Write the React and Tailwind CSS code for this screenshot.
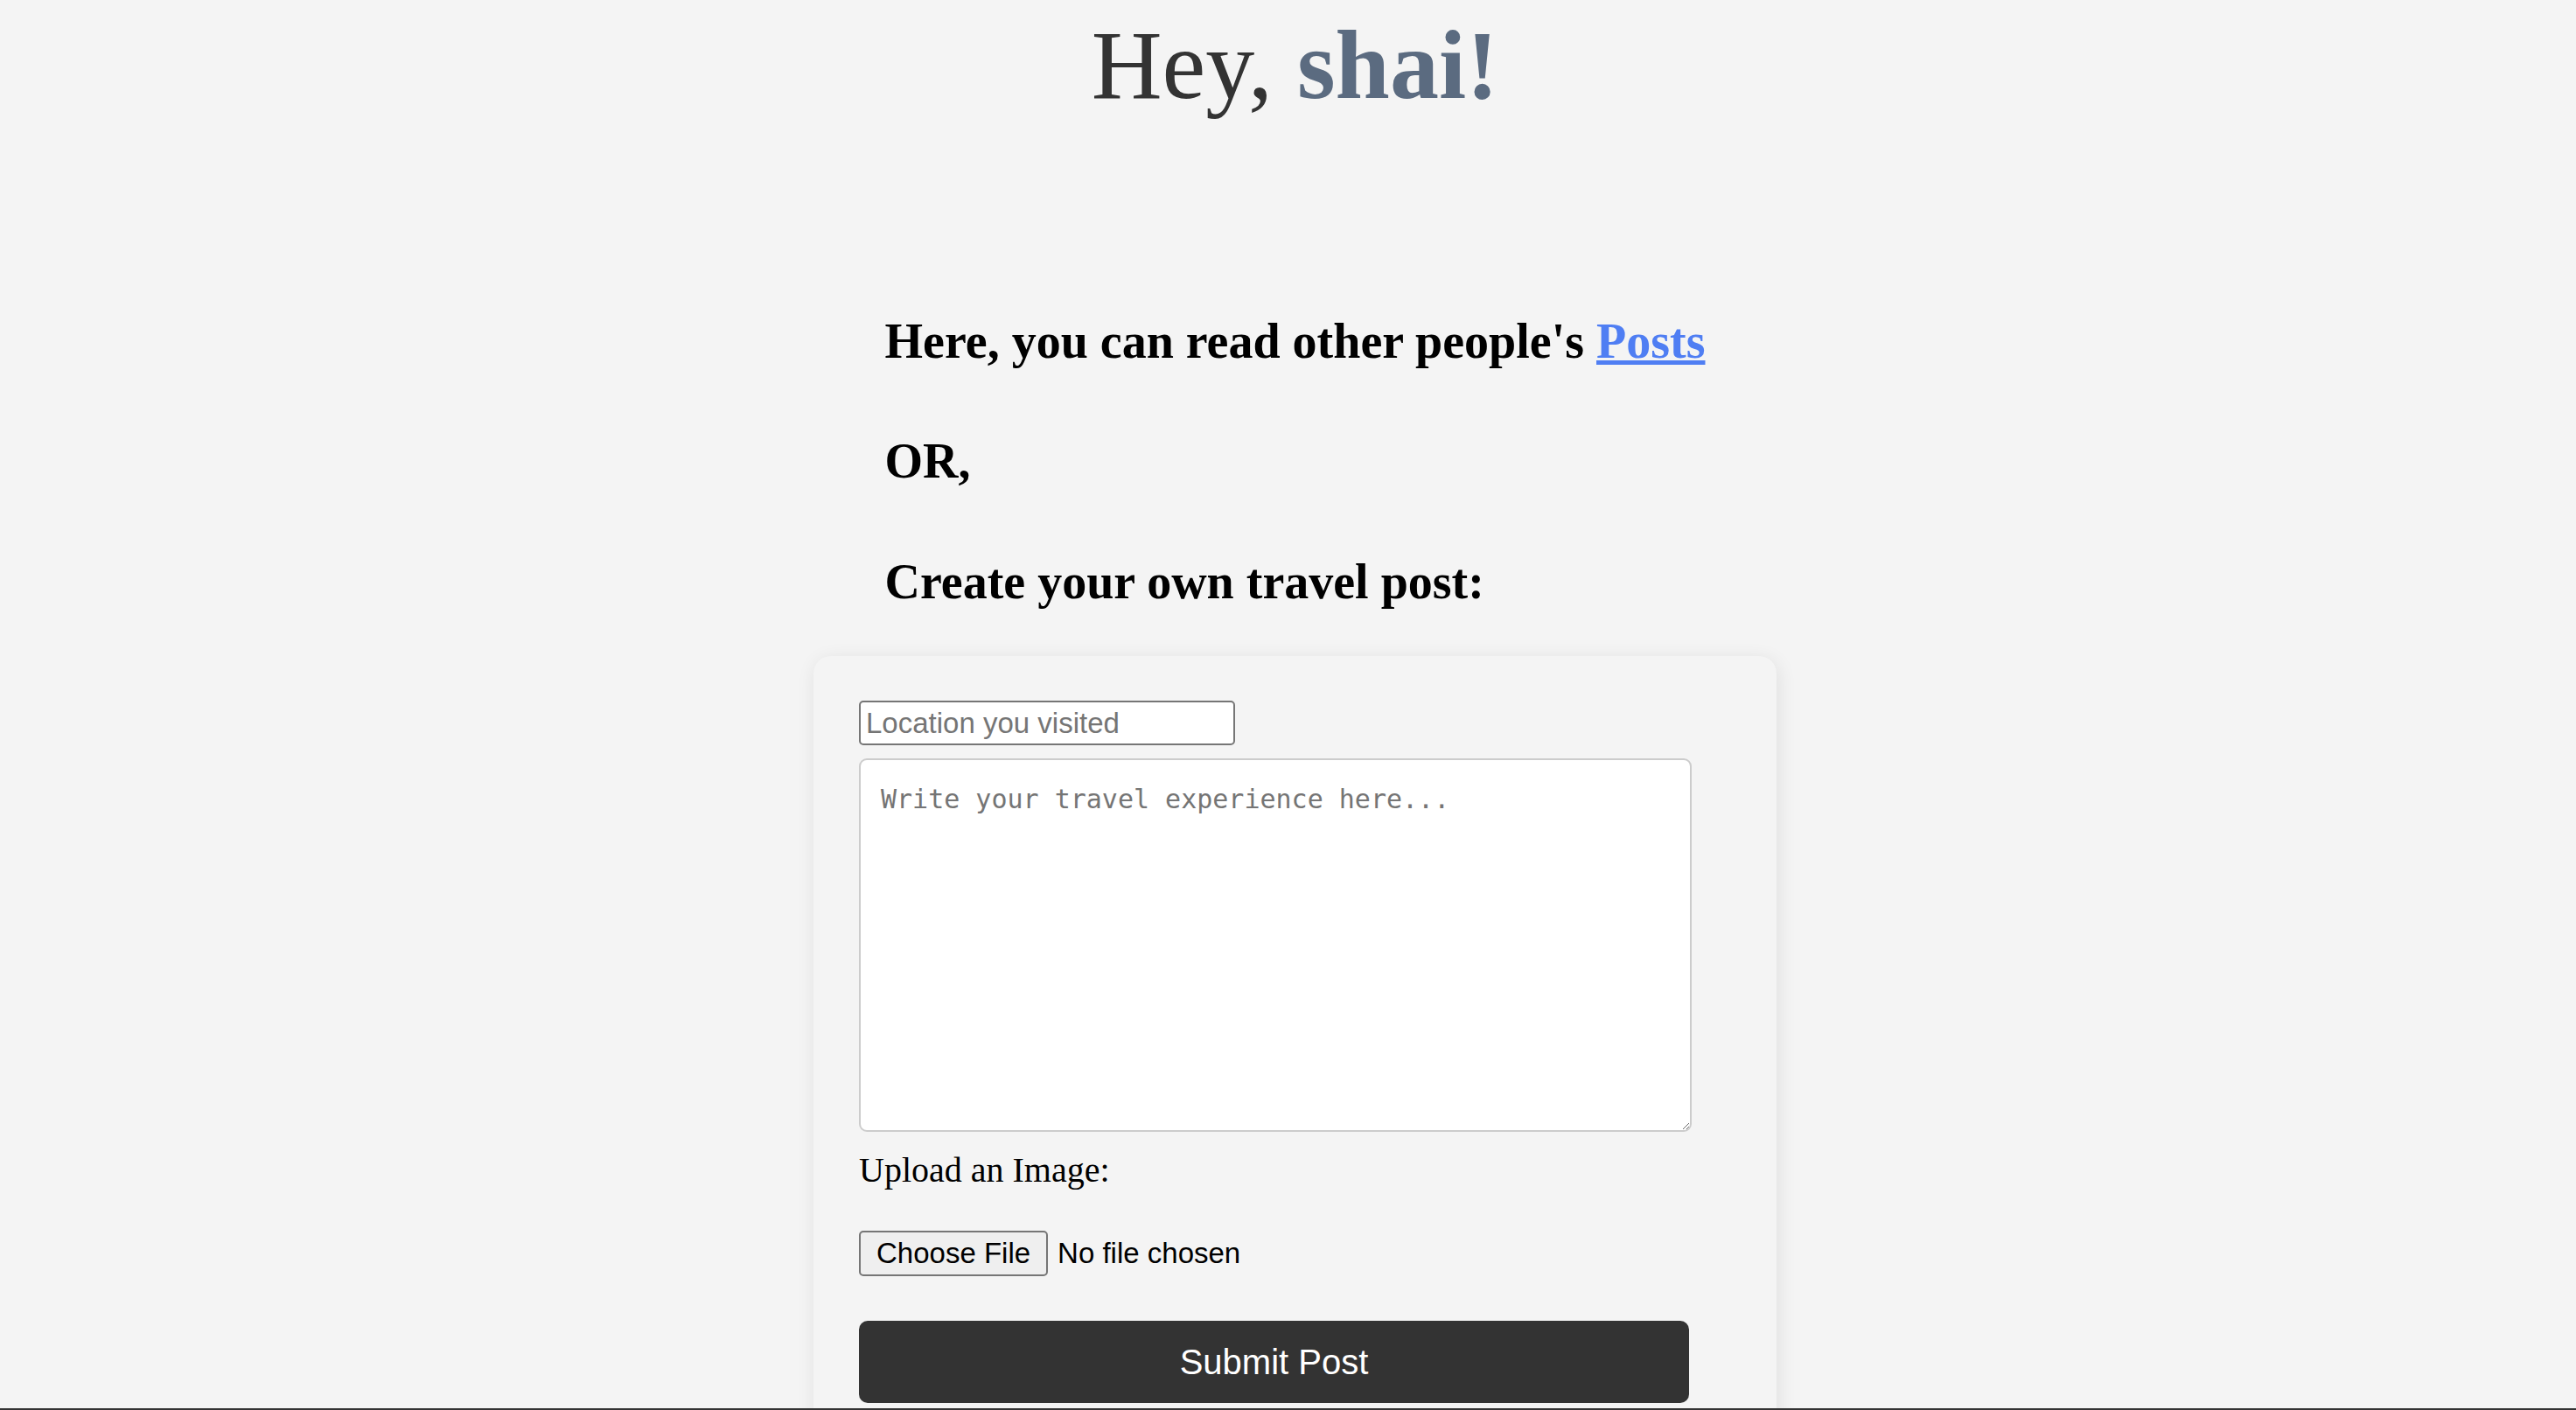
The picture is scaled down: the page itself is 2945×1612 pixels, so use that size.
import { useState } from 'react';

export default function App() {
    const [location, setLocation] = useState('');
    const [story, setStory] = useState('');

    const submit = (e) => {
        e.preventDefault();
    };

    return (
        <div className="min-h-screen bg-[#f4f4f4] pt-[18px] pl-[16px] font-['Liberation_Serif',serif] text-black">
            {/* Greeting */}
            <h1 className="text-center text-[112px] leading-none font-normal text-[#333333]">
                Hey, <span className="font-bold text-[#5b6b80]">shai!</span>
            </h1>

            {/* Intro */}
            <div className="mx-auto mt-[232px] w-fit">
                <h2 className="text-[56px] leading-none font-bold">
                    Here, you can read other people's{' '}
                    <a href="#" className="text-[#4f7ef3] underline">Posts</a>
                </h2>
                <h2 className="mt-[81px] text-[56px] leading-none font-bold">OR,</h2>
                <h2 className="mt-[82px] text-[56px] leading-none font-bold">Create your own travel post:</h2>
            </div>

            {/* Post form */}
            <form
                onSubmit={submit}
                className="mx-auto mt-[57px] flex w-[1101px] flex-col items-start rounded-[20px] bg-[#f4f4f4] px-[52px] pt-[51px] pb-[60px] shadow-[2px_4px_22px_rgba(0,0,0,0.09)]"
            >
                <input
                    type="text"
                    value={location}
                    onChange={(e) => setLocation(e.target.value)}
                    placeholder="Location you visited"
                    className="h-[51px] w-[430px] rounded-[5px] border-2 border-[#767676] bg-white px-[6px] font-['Liberation_Sans',Arial,sans-serif] text-[33px] leading-[normal] placeholder:text-[#757575]"
                />
                <textarea
                    value={story}
                    onChange={(e) => setStory(e.target.value)}
                    placeholder="Write your travel experience here..."
                    className="mt-[15px] h-[427px] w-[952px] resize rounded-[9px] border-2 border-[#cccccc] bg-white px-[23px] pt-[27px] font-['DejaVu_Sans_Mono',monospace] text-[30px] leading-[normal] placeholder:text-[#757575]"
                />
                <label className="mt-[24px] text-[40px] leading-none">Upload an Image:</label>
                <input
                    type="file"
                    className="mt-[49px] font-['Liberation_Sans',Arial,sans-serif] text-[33px] leading-[normal] text-black file:mr-[11px] file:rounded-[5px] file:border-2 file:border-solid file:border-[#767676] file:bg-[#efefef] file:px-[18px] file:py-[5px] file:text-black"
                />
                <button
                    type="submit"
                    className="mt-[51px] h-[94px] w-[949px] rounded-[10px] bg-[#333333] font-['Liberation_Sans',Arial,sans-serif] text-[40px] text-white"
                >
                    Submit Post
                </button>
            </form>

            <div className="fixed right-0 bottom-0 left-0 h-[2px] bg-[#333333]" />
        </div>
    );
}
